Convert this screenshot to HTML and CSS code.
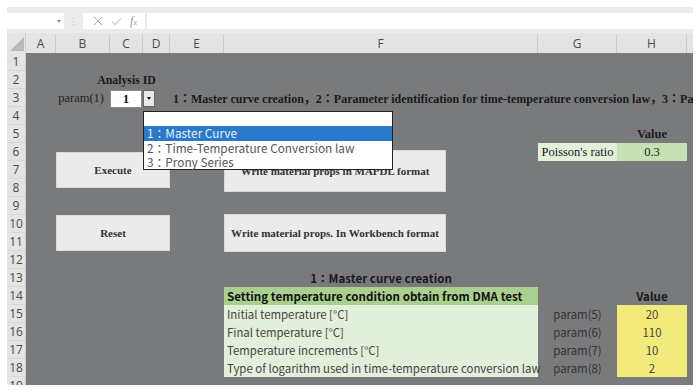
FILE: index.html
```html
<!DOCTYPE html>
<html>
<head>
    <title>Analysis sheet</title>
    <meta name="viewport" content="width=device-width, initial-scale=1.0">
    <link rel="stylesheet" href="styles.css">
</head>
<body>
    <div class="app">
        <div class="toolbar">
            <div class="namebox"><span class="caret"></span></div>
            <div class="grip"></div>
            <div class="fxbox">
                <svg width="10" height="10" viewBox="0 0 10 10"><path d="M1 1L9 9M9 1L1 9" stroke="#a8a8a8" stroke-width="1" fill="none"/></svg>
                <svg width="11" height="9" viewBox="0 0 11 9"><path d="M1 4.5L4 7.5L10 1.5" stroke="#a8a8a8" stroke-width="1" fill="none"/></svg>
                <span class="fx">f<small>x</small></span>
            </div>
            <div class="formula"></div>
        </div>

        <div class="sheet">
            <div class="corner"><svg width="19" height="20" viewBox="0 0 19 20"><path d="M3 18L17 4V18Z" fill="#b9b9b9"/></svg></div>
            <div class="colheads">
                <div>A</div><div>B</div><div>C</div><div>D</div><div>E</div>
                <div>F</div><div>G</div><div>H</div><div></div>
            </div>
            <div class="rowheads">
                <div>1</div><div>2</div><div>3</div><div>4</div><div>5</div><div>6</div>
                <div>7</div><div>8</div><div>9</div><div>10</div><div>11</div><div>12</div>
                <div>13</div><div>14</div><div>15</div><div>16</div><div>17</div><div>18</div>
                <div>19</div>
            </div>

            <div class="cells">
                <div class="cell analysis-label">Analysis ID</div>
                <div class="cell param1">param(1)</div>
                <div class="combo">1</div>
                <div class="combo-btn"><span></span></div>
                <div class="cell legend">1：Master curve creation，2：Parameter identification for time-temperature conversion law，3：Parameter identification for Prony series</div>

                <div class="btn btn-exec">Execute</div>
                <div class="btn btn-reset">Reset</div>
                <div class="btn btn-mapdl">Write material props in MAPDL format</div>
                <div class="btn btn-wb">Write material props. In Workbench format</div>

                <div class="cell value-serif r5">Value</div>
                <div class="cell poisson r6">Poisson's ratio</div>
                <div class="cell poisson-val r6">0.3</div>

                <div class="cell section-title r13">1：Master curve creation</div>
                <div class="cell table-head r14">Setting temperature condition obtain from DMA test</div>
                <div class="cell value-sans r14">Value</div>

                <div class="cell label r15">Initial temperature [°C]</div>
                <div class="cell pname r15">param(5)</div>
                <div class="cell pval r15">20</div>

                <div class="cell label r16">Final temperature [°C]</div>
                <div class="cell pname r16">param(6)</div>
                <div class="cell pval r16">110</div>

                <div class="cell label r17">Temperature increments [°C]</div>
                <div class="cell pname r17">param(7)</div>
                <div class="cell pval r17">10</div>

                <div class="cell label r18">Type of logarithm used in time-temperature conversion law</div>
                <div class="cell pname r18">param(8)</div>
                <div class="cell pval r18">2</div>

                <div class="dropdown">
                    <div class="opt selected">1：Master Curve</div>
                    <div class="opt">2：Time-Temperature Conversion law</div>
                    <div class="opt">3：Prony Series</div>
                </div>
            </div>
        </div>
    </div>
</body>
</html>
```

FILE: styles.css
```css
* {
    box-sizing: border-box;
}
body {
    margin: 0;
    background: #fff;
    font-family: "Liberation Serif", "Noto Sans CJK JP", serif;
    color: #1a1a1a;
}
.app {
    margin: 7px 0 0 7px;
    width: 686px;
}

/* formula bar */
.toolbar {
    display: flex;
    height: 26px;
    padding: 6px 0 4px;
    background: #ececec;
}
.namebox {
    width: 57px;
    background: #fff;
    position: relative;
}
.caret {
    position: absolute;
    right: 3px;
    top: 7px;
    border-left: 2px solid transparent;
    border-right: 2px solid transparent;
    border-top: 3px solid #888;
}
.grip {
    width: 19px;
    display: flex;
    justify-content: center;
    align-items: center;
}
.grip::before {
    content: "";
    width: 1px;
    height: 7px;
    background: repeating-linear-gradient(#c0c0c0 0 1px, transparent 1px 3px);
}
.fxbox {
    width: 62px;
    background: #fff;
    display: flex;
    align-items: center;
    justify-content: space-around;
    padding: 0 4px 0 6px;
}
.fx {
    font-family: "Liberation Serif", serif;
    font-style: italic;
    font-size: 12px;
    color: #9a9a9a;
}
.fx small {
    font-size: 8px;
}
.formula {
    flex: 1;
    margin-left: 2px;
    background: #fff;
}

/* sheet */
.sheet {
    display: grid;
    grid-template-columns: 19px 1fr;
    grid-template-rows: 20px 332px;
}
.corner {
    background: #e4e4e4;
    border-right: 1px solid #cfcfcf;
}
.corner svg {
    display: block;
}
.colheads {
    display: grid;
    grid-template-columns: 30px 54px 33px 27px 54px 314px 79px 70px 6px;
    background: #e4e4e4;
    font-family: "Open Sans", sans-serif;
}
.colheads div {
    border-right: 1px solid #c8c8c8;
    margin-top: 2px;
    text-align: center;
    font-size: 12px;
    line-height: 18px;
    color: #4a4a4a;
}
.colheads div:last-child {
    border-right: none;
}
.rowheads {
    background: #e4e4e4;
    border-right: 1px solid #cfcfcf;
    overflow: hidden;
    font-family: "Open Sans", sans-serif;
}
.rowheads div {
    height: 18px;
    line-height: 18px;
    border-bottom: 1px solid #d6d6d6;
    text-align: center;
    font-size: 12px;
    color: #4a4a4a;
}

.cells {
    position: relative;
    overflow: hidden;
    display: grid;
    grid-template-columns: 30px 54px 33px 27px 54px 314px 79px 70px 6px;
    grid-template-rows: repeat(18, 18px) 8px;
    background: #797a7c;
    font-family: "Liberation Serif", "Noto Sans CJK JP", serif;
}
.cell {
    display: flex;
    align-items: center;
    white-space: nowrap;
    font-size: 12.5px;
}
.r5 { grid-row: 5; }
.r6 { grid-row: 6; }
.r13 { grid-row: 13; }
.r14 { grid-row: 14; }
.r15 { grid-row: 15; }
.r16 { grid-row: 16; }
.r17 { grid-row: 17; }
.r18 { grid-row: 18; }

.analysis-label {
    grid-row: 2;
    grid-column: 3;
    justify-content: center;
    font-weight: bold;
    font-size: 11.8px;
}
.param1 {
    grid-row: 3;
    grid-column: 2;
    justify-content: flex-end;
    padding-right: 6px;
    color: #222;
}
.combo {
    grid-row: 3;
    grid-column: 3;
    align-self: start;
    margin: 1px 1px 0 0;
    height: 18px;
    background: #fff;
    border: 1px solid #8a8a8a;
    text-align: center;
    font-weight: bold;
    font-size: 13px;
    line-height: 16px;
}
.combo-btn {
    grid-row: 3;
    grid-column: 4;
    align-self: start;
    width: 12px;
    height: 17px;
    margin-top: 1px;
    background: #e8e8e8;
    border: 1px solid #666;
    display: flex;
    align-items: center;
    justify-content: center;
}
.combo-btn span {
    border-left: 2.5px solid transparent;
    border-right: 2.5px solid transparent;
    border-top: 3px solid #111;
}
.legend {
    grid-row: 3;
    grid-column: 5 / 10;
    padding-left: 3px;
    font-weight: bold;
    font-size: 12px;
    overflow: hidden;
}

/* form buttons */
.btn {
    display: flex;
    align-items: center;
    justify-content: center;
    background: #ebebeb;
    border: 1px solid #dadada;
    font-weight: bold;
    font-size: 11px;
    color: #333;
    white-space: nowrap;
}
.btn-exec {
    grid-column: 2 / 5;
    grid-row: 6 / 9;
    margin: 9px 0;
}
.btn-reset {
    grid-column: 2 / 5;
    grid-row: 10 / 12;
}
.btn-mapdl {
    grid-column: 6;
    grid-row: 6 / 9;
    width: 222px;
    margin: 7px 0 5px;
}
.btn-wb {
    grid-column: 6;
    grid-row: 10 / 12;
    width: 222px;
    margin: -1px 0;
}

/* Poisson's ratio block */
.value-serif {
    grid-column: 8;
    justify-content: center;
    font-weight: bold;
}
.poisson {
    grid-column: 7;
    justify-content: center;
    background: #e2efda;
}
.poisson-val {
    grid-column: 8;
    justify-content: center;
    background: #c6e0b4;
}

/* temperature table */
.section-title,
.table-head,
.value-sans,
.label,
.pname,
.pval {
    font-family: "Noto Sans CJK JP", "Noto Sans", sans-serif;
    font-size: 11.4px;
}
.section-title {
    grid-column: 6;
    justify-content: center;
    font-weight: bold;
    font-size: 11.6px;
}
.table-head {
    grid-column: 6;
    padding-left: 3px;
    background: #a9d08e;
    font-weight: bold;
    font-size: 11.6px;
    color: #111;
}
.value-sans {
    grid-column: 8;
    justify-content: center;
    font-weight: bold;
    font-size: 11.6px;
}
.label {
    grid-column: 6;
    padding-left: 3px;
    background: #e2efda;
    color: #444;
}
.pname {
    grid-column: 7;
    justify-content: center;
    color: #333;
}
.pval {
    grid-column: 8;
    justify-content: center;
    background: #f2ea7b;
    color: #444;
}

/* open list of the Analysis ID combo */
.dropdown {
    position: absolute;
    left: 117px;
    top: 58px;
    width: 250px;
    height: 59px;
    padding-top: 14px;
    background: #fff;
    border: 1px solid #222;
    z-index: 2;
    font-family: "Noto Sans CJK JP", "Noto Sans", sans-serif;
    font-size: 11.8px;
}
.opt {
    height: 14.5px;
    line-height: 14.5px;
    padding-left: 3px;
    color: #555;
    white-space: nowrap;
}
.opt.selected {
    background: #2a7acb;
    color: #e6f0fb;
}
```
